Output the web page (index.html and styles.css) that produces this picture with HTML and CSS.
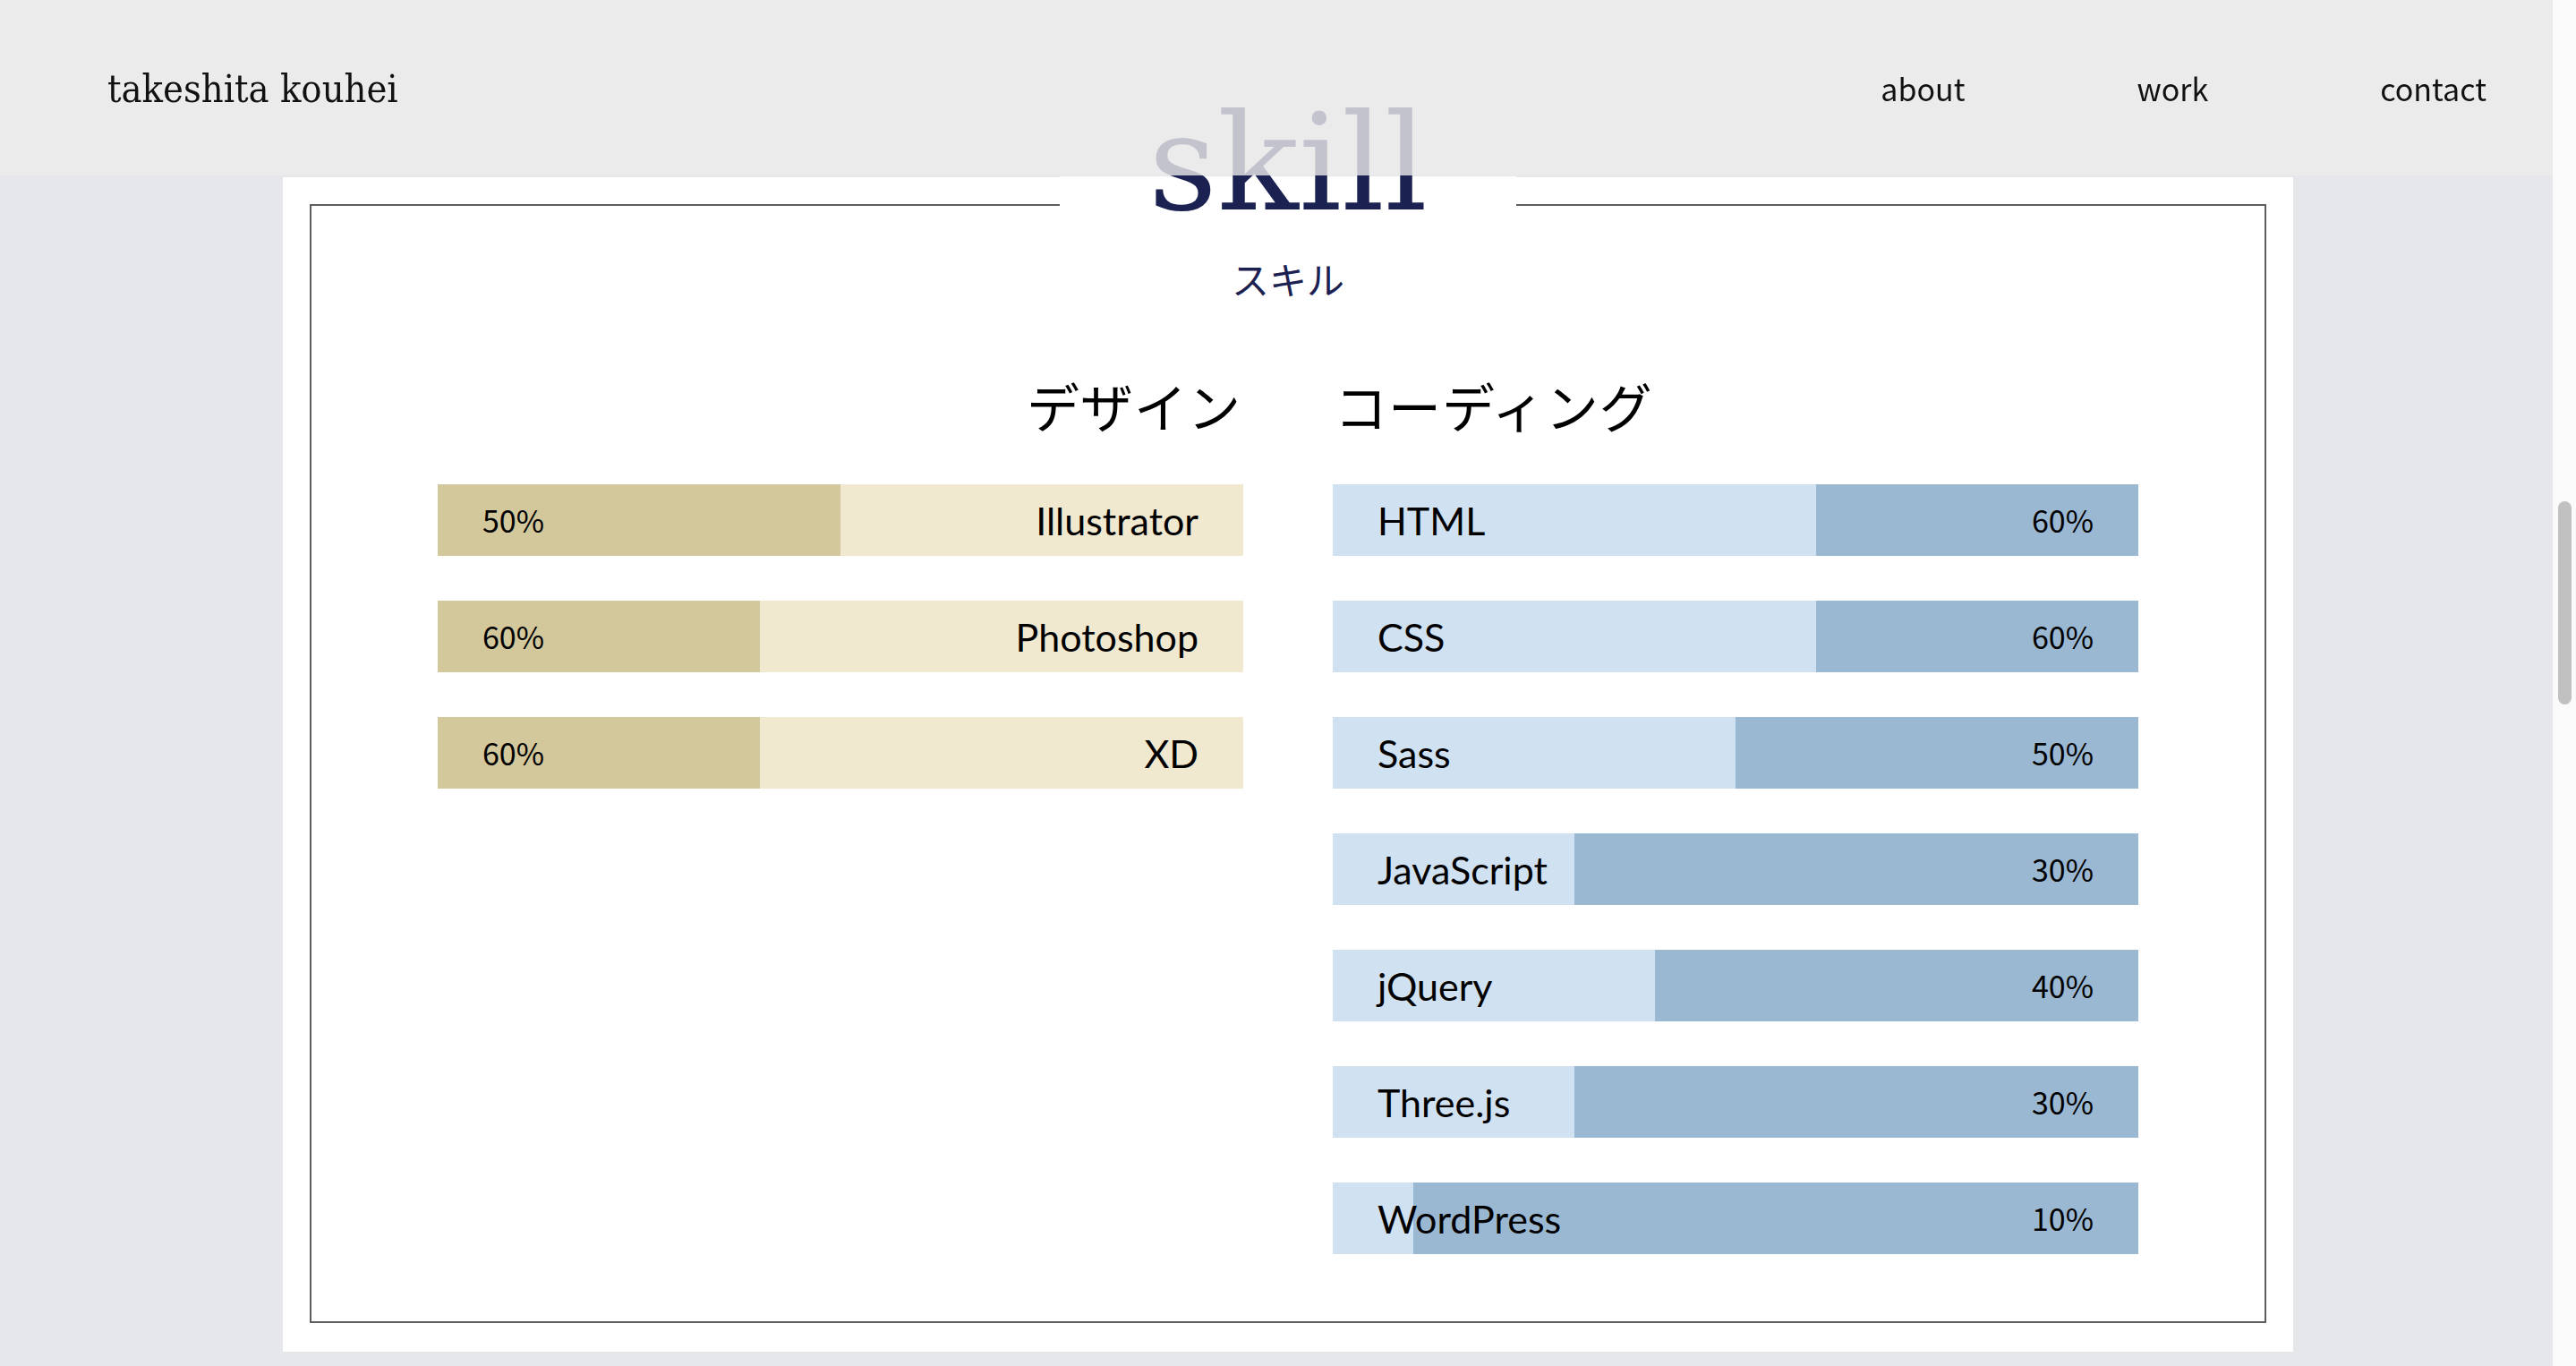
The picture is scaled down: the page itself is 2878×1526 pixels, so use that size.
FILE: index.html
```html
<!DOCTYPE html>
<html lang="ja">
<head>
<meta charset="utf-8">
<title>takeshita kouhei - skill</title>
<link rel="stylesheet" href="styles.css">
</head>
<body>
<header class="site-header">
  <div class="logo">takeshita kouhei</div>
  <nav class="nav">
    <a class="nav-link" href="#about">about</a>
    <a class="nav-link" href="#work">work</a>
    <a class="nav-link" href="#contact">contact</a>
  </nav>
</header>

<main class="page">
  <section class="card">
    <div class="frame">
      <h2 class="title">skill</h2>
      <p class="subtitle">スキル</p>
      <div class="columns">
        <div class="col col-design">
          <h3 class="col-head">デザイン</h3>
          <ul class="bars">
            <li class="bar bar-design" style="--p:50%"><span class="pct">50%</span><span class="name">Illustrator</span></li>
            <li class="bar bar-design" style="--p:60%"><span class="pct">60%</span><span class="name">Photoshop</span></li>
            <li class="bar bar-design" style="--p:60%"><span class="pct">60%</span><span class="name">XD</span></li>
          </ul>
        </div>
        <div class="col col-code">
          <h3 class="col-head">コーディング</h3>
          <ul class="bars">
            <li class="bar bar-code" style="--p:60%"><span class="name">HTML</span><span class="pct">60%</span></li>
            <li class="bar bar-code" style="--p:60%"><span class="name">CSS</span><span class="pct">60%</span></li>
            <li class="bar bar-code" style="--p:50%"><span class="name">Sass</span><span class="pct">50%</span></li>
            <li class="bar bar-code" style="--p:30%"><span class="name">JavaScript</span><span class="pct">30%</span></li>
            <li class="bar bar-code" style="--p:40%"><span class="name">jQuery</span><span class="pct">40%</span></li>
            <li class="bar bar-code" style="--p:30%"><span class="name">Three.js</span><span class="pct">30%</span></li>
            <li class="bar bar-code" style="--p:10%"><span class="name">WordPress</span><span class="pct">10%</span></li>
          </ul>
        </div>
      </div>
    </div>
  </section>
</main>

<div class="scrollbar"><div class="scrollbar-thumb"></div></div>
</body>
</html>
```

FILE: styles.css
```css
html, body {
  margin: 0;
  padding: 0;
}
body {
  background: #e6e7eb;
  height: 1526px;
  overflow: hidden;
  font-family: "Noto Sans CJK JP", "Noto Sans", sans-serif;
  color: #000;
}

/* header (fixed, translucent, over the content) */
.site-header {
  position: fixed;
  top: 0;
  left: 0;
  right: 0;
  height: 196px;
  box-sizing: border-box;
  padding: 0 100px 0 120px;
  display: flex;
  align-items: center;
  justify-content: space-between;
  background: rgba(236, 236, 236, 0.8);
  z-index: 10;
}
.logo {
  font-family: "DejaVu Serif", "Liberation Serif", serif;
  font-stretch: condensed;
  font-size: 43px;
  color: #111;
  padding-top: 2px;
}
.nav {
  display: flex;
  gap: 192px;
}
.nav-link {
  font-size: 34px;
  color: #111;
  text-decoration: none;
}

/* content */
.page {
  padding-top: 198px;
}
.card {
  width: 2246px;
  margin: 0 auto;
  box-sizing: border-box;
  padding: 30px 30px 32px;
  background: #fff;
}
.frame {
  border: 2px solid #5e5e5e;
  padding-bottom: 75px;
}
.title {
  width: 510px;
  margin: -123px auto 0;
  background: linear-gradient(to bottom, transparent 90px, #fff 90px);
  text-align: center;
  font-family: "DejaVu Serif", "Liberation Serif", serif;
  font-weight: normal;
  font-size: 150px;
  line-height: 150px;
  color: #1b2151;
}
.subtitle {
  margin: 24px 0 0;
  text-align: center;
  font-size: 42px;
  line-height: 60px;
  color: #1b2151;
}

.columns {
  display: flex;
  justify-content: center;
  gap: 100px;
  margin-top: 72px;
}
.col {
  width: 900px;
}
.col-head {
  margin: 0 0 48px;
  font-weight: normal;
  font-size: 59px;
  line-height: 80px;
  letter-spacing: 1px;
}
.col-design .col-head {
  text-align: right;
  padding-right: 2px;
}
.col-code .col-head {
  text-align: left;
  padding-left: 2px;
}

.bars {
  list-style: none;
  margin: 0;
  padding: 0;
  display: flex;
  flex-direction: column;
  gap: 50px;
}
.bar {
  height: 80px;
  box-sizing: border-box;
  padding: 0 50px;
  display: flex;
  align-items: center;
  justify-content: space-between;
}
.bar-design {
  background: linear-gradient(to left, #f0e9d0 var(--p), #d3c89c var(--p));
}
.bar-code {
  background: linear-gradient(to right, #d0e1f1 var(--p), #9bb8d3 var(--p));
}
.name {
  font-family: Lato, "Noto Sans CJK JP", sans-serif;
  font-size: 43px;
  line-height: 1;
}
.pct {
  font-size: 34px;
  line-height: 1;
}

/* overlay scrollbar */
.scrollbar {
  position: fixed;
  top: 0;
  right: 0;
  width: 26px;
  height: 100%;
  background: #fafafa;
  z-index: 20;
}
.scrollbar-thumb {
  width: 15px;
  height: 227px;
  margin: 560px 0 0 6px;
  border-radius: 8px;
  background: #c1c1c1;
}
```
